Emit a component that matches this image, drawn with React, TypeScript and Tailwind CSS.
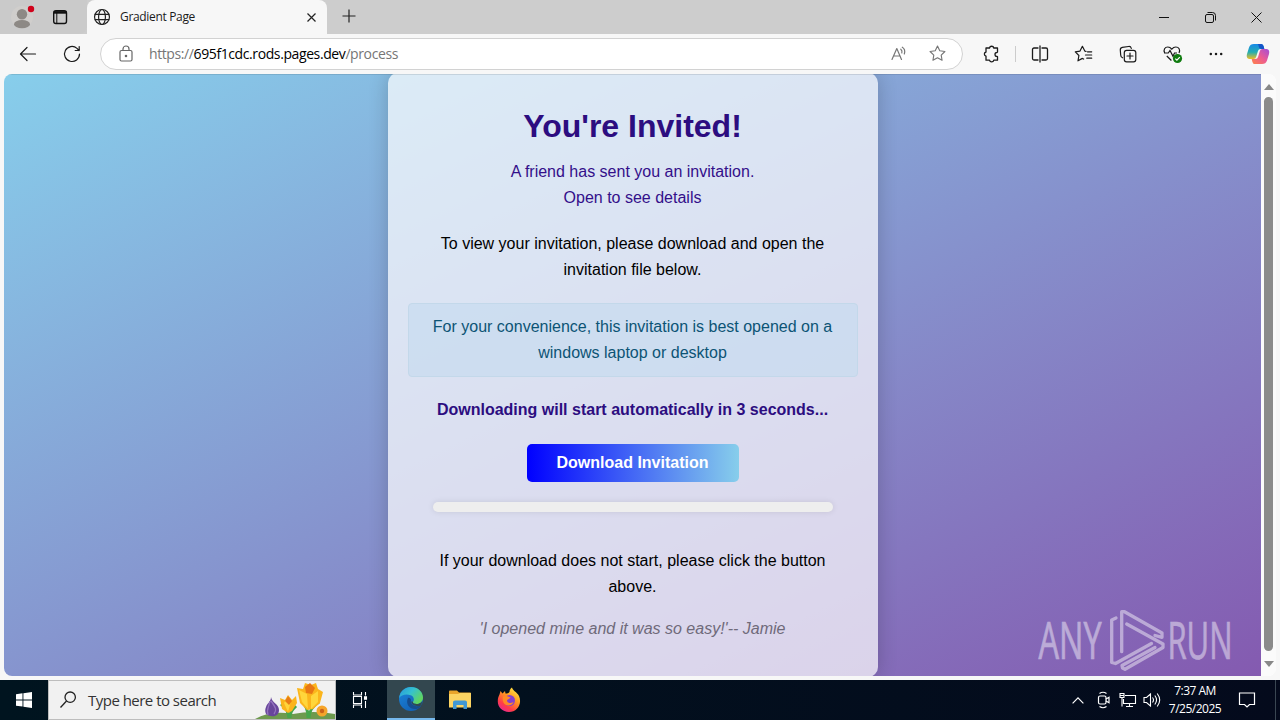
import type { ReactNode } from "react";

type IconProps = {
  size?: number;
  className?: string;
  width?: number;
  children: ReactNode;
};

const Icon = ({ size = 20, className = "", width = 1.2, children }: IconProps) => (
  <svg
    width={size}
    height={size}
    viewBox="0 0 20 20"
    fill="none"
    stroke="currentColor"
    strokeWidth={width}
    strokeLinecap="round"
    strokeLinejoin="round"
    className={`shrink-0 ${className}`}
  >
    {children}
  </svg>
);

const STAR = "M10 2.2l2.4 4.9 5.4.8-3.9 3.8.9 5.4-4.8-2.6-4.8 2.6.9-5.4-3.9-3.8 5.4-.8z";

const TitleBar = () => (
  <div className="flex h-[34px] bg-[#cdcdcd]">
    <div className="flex w-[87px] items-center bg-[#cacaca] rounded-br-lg">
      {/* Profile */}
      <svg width="26" height="28" viewBox="0 0 26 28" className="ml-[10px]">
        <circle cx="12" cy="14" r="11" fill="#d0cecc" />
        <circle cx="12" cy="11.2" r="5.2" fill="#8d8985" />
        <ellipse cx="12" cy="21.2" rx="8" ry="4.1" fill="#8d8985" />
        <circle cx="21" cy="6" r="3.2" fill="#d0021b" />
      </svg>
      <svg width="16" height="16" viewBox="0 0 16 16" className="ml-4" fill="none" stroke="#111" strokeWidth="1.4">
        <rect x="1.7" y="1.7" width="12.8" height="12.8" rx="2.2" />
        <path d="M1.7 3.4h12.8" strokeWidth="2.6" />
        <path d="M4.8 4v10.5" strokeWidth="1" />
      </svg>
    </div>
    <div className="flex w-[240px] items-center rounded-t-lg bg-[#f7f7f7] pl-1.5">
      <Icon size={18} className="text-[#222]" width={1.3}>
        <circle cx="10" cy="10" r="8.3" />
        <ellipse cx="10" cy="10" rx="3.8" ry="8.3" />
        <path d="M2.4 7h15.2M2.4 13h15.2" />
      </Icon>
      <span className="ml-[9px] flex-1 whitespace-nowrap text-[12px] leading-4 tracking-[-0.33px] text-[#1b1b1b]">
        Gradient Page
      </span>
      <svg width="9" height="9" viewBox="0 0 9 9" stroke="#222" strokeWidth="1.2" className="mr-[11px]">
        <path d="M.5 .5l8 8M8.500 .5l-8 8" />
      </svg>
    </div>
    <svg width="14" height="14" viewBox="0 0 14 14" stroke="#222" strokeWidth="1.2" className="ml-[15px] mt-[9px]">
      <path d="M7 .5v13M.5 7h13" />
    </svg>
    <div className="ml-auto flex items-center pr-[18px] text-[#111]">
      <svg width="10" height="10" viewBox="0 0 10 10" stroke="currentColor">
        <path d="M0 5.500h10" />
      </svg>
      <svg width="11" height="11" viewBox="0 0 11 11" fill="none" stroke="currentColor" className="ml-9">
        <rect x=".5" y="2.500" width="8" height="8" rx="1.500" />
        <path d="M2.500 .5h5a3 3 0 0 1 3 3v5" />
      </svg>
      <svg width="11" height="11" viewBox="0 0 11 11" stroke="currentColor" className="ml-[35px]">
        <path d="M.5 .5l10 10M10.500 .5l-10 10" />
      </svg>
    </div>
  </div>
);

const Toolbar = () => (
  <div className="flex h-[39px] items-center bg-[#f7f7f7] text-[#1a1a1a]">
    <Icon className="ml-[18px]">
      <path d="M17.500 10H2.500M9 3.500L2.500 10 9 16.500" />
    </Icon>
    <Icon className="ml-6">
      <path d="M17.500 10A7.500 7.500 0 1 1 15 4.400L17 6.500M17.200 2.500v4h-4" />
    </Icon>
    <div className="ml-[18px] flex h-8 w-[863px] items-center rounded-full border border-[#d2d2d2] bg-white">
      <Icon className="ml-[15px] text-[#666]">
        <rect x="4" y="6.500" width="12" height="10.500" rx="1.500" />
        <path d="M7 6.500V5a3 3 0 0 1 6 0v1.500" />
        <circle cx="10" cy="12" r=".7" fill="currentColor" />
      </Icon>
      <span className="ml-[13px] flex-1 whitespace-nowrap text-[14px] tracking-[-0.4px] text-[#767676]">
        https://<span className="text-black">695f1cdc.rods.pages.dev</span>/process
      </span>
      <Icon className="text-[#767676]">
        <path d="M3 15.500L7.800 4.500l4.700 11M4.700 12h6.200M11.800 5.200c1.200 1 1.500 2.300 1 3.800M13.300 3.200c2.400 1.500 2.900 4 2 6.800" />
      </Icon>
      <Icon size={19} className="ml-[19px] mr-[15px] text-[#767676]">
        <path d={STAR} />
      </Icon>
    </div>
    <Icon className="ml-[19px]" width={1.3}>
      <path d="M7.500 4a2.200 2.200 0 0 1 4.300 0h3.700v4a.8.8 0 0 1-.6.500 1.900 1.900 0 0 0 0 3.800.8.8 0 0 1 .6.500v3.400h-3.700a2.200 2.200 0 0 1-4.300 0H4v-4.100a2.100 2.100 0 0 1 0-4.100V4z" />
    </Icon>
    <div className="ml-[13px] h-4 w-px bg-[#ccc]" />
    <Icon className="ml-[14px]" width={1.3}>
      <path d="M8 4H4a1.500 1.500 0 0 0-1.500 1.500v9A1.500 1.500 0 0 0 4 16h4M12 4h4a1.500 1.500 0 0 1 1.500 1.500v9A1.500 1.500 0 0 1 16 16h-4M10 2v16" />
    </Icon>
    <Icon className="ml-6">
      <path d="M12 7.300L10.800 7.100 8.400 2.300 6 7.100l-4.700.7 3.600 3.700-.9 5.300 4.400-2.400 1.200.7M13.500 7.800h4.200M11.500 11h6.200M12.800 14.200h4.900" />
    </Icon>
    <Icon className="ml-6">
      <path d="M4.600 13.800A3 3 0 0 1 2.700 11L2.300 6a2.500 2.500 0 0 1 2-2.600l6.200-.9A2.500 2.500 0 0 1 13.300 4.300" />
      <rect x="6.300" y="6.300" width="11.500" height="11.500" rx="2.300" />
      <path d="M12 9v6M9 12h6" />
    </Icon>
    <svg width="22" height="20" viewBox="0 0 22 20" className="ml-6 shrink-0" fill="none" stroke="currentColor" strokeWidth="1.200">
      <path d="M2.700 9C1 5.500 3 3 5.800 3c2 0 3.200 1.200 4 2.200.8-1 2-2.200 4-2.200 3 0 4.800 2.800 3.200 6M4.800 12l4.600 4.500M2 9h4.300L8 6.500l3 5.800L12.500 9H15" />
      <circle cx="15.500" cy="14.500" r="4.600" fill="#107c10" stroke="none" />
      <path d="M13.300 14.600l1.600 1.600 2.900-3" stroke="#fff" />
    </svg>
    <Icon className="ml-[22px]">
      <g fill="currentColor" stroke="none">
        <circle cx="4.800" cy="10" r="1.250" />
        <circle cx="10" cy="10" r="1.250" />
        <circle cx="15.200" cy="10" r="1.250" />
      </g>
    </Icon>
    {/* Copilot */}
    <svg width="24" height="22" viewBox="0 0 24 22" className="ml-5 shrink-0">
      <defs>
        <linearGradient id="cpA" x1="0" y1="0" x2="0" y2="1">
          <stop offset="0" stopColor="#1688e8" />
          <stop offset=".55" stopColor="#25aeb0" />
          <stop offset="1" stopColor="#f0bd24" />
        </linearGradient>
        <linearGradient id="cpB" x1="1" y1="0" x2="0" y2="1">
          <stop offset="0" stopColor="#a34ed8" />
          <stop offset=".5" stopColor="#ec5b93" />
          <stop offset="1" stopColor="#ff8348" />
        </linearGradient>
      </defs>
      <path d="M8 1h7c1.600 0 2.200 1 2.700 2.600L18.300 6h-3.500c-1.600 0-2.500.8-3 2.500l-1.500 5C9.700 15.200 9 16 7.500 16H4c-3 0-3.700-2.200-3-5L3 4.500C3.800 2 5.300 1 8 1z" fill="url(#cpA)" />
      <path d="M11.500 1H15c1.600 0 2.200 1 2.700 2.600L18.300 6H15c-2 0-2-2-2.400-3.200C12.300 1.800 12 1.200 11.500 1z" fill="#1455c8" />
      <path d="M16 21H9c-1.600 0-2.200-1-2.700-2.600L5.700 16h3.500c1.600 0 2.500-.8 3-2.500l1.500-5C14.300 6.800 15 6 16.500 6H20c3 0 3.700 2.200 3 5l-2 6.500c-.8 2.500-2.300 3.500-5 3.500z" fill="url(#cpB)" />
    </svg>
  </div>
);

const InviteCard = () => (
  <div className="-mt-px h-[604px] w-[490px] shrink-0 rounded-[10px] bg-white/70 px-5 pt-[28px] text-center font-['Liberation_Sans',Arial,sans-serif] text-[16px] leading-[26px] text-black shadow-[0_0_20px_rgba(0,0,0,0.2)]">
    <h1 className="pr-px text-[32px] leading-[51px] font-bold text-[#2c0d80]">You're Invited!</h1>
    <p className="mt-[7px] pr-px text-[#330f8a]">
      A friend has sent you an invitation.
      <br />
      Open to see details
    </p>
    <p className="mx-auto mt-5 w-[400px] pr-px">To view your invitation, please download and open the invitation file below.</p>
    <div className="mt-5 rounded border border-[#c3d8ea] bg-[#c8dcef]/70 pr-[21px] pl-5 py-[10px] text-[#0c5475]">
      For your convenience, this invitation is best opened on a windows laptop or desktop
    </div>
    <p className="mt-5 pr-px font-bold text-[#2c0d80]">Downloading will start automatically in 3 seconds...</p>
    <button className="mt-[21px] block h-[38px] w-[212px] pr-px mx-auto rounded-[5px] bg-linear-to-r/srgb from-[#0000ff] to-[#87ceeb] font-bold text-white">
      Download Invitation
    </button>
    <div className="mx-auto mt-5 h-[10px] w-[400px] rounded-full bg-[#eeeeee] shadow-[0_0_6px_rgba(0,0,0,0.1)]" />
    <p className="mx-auto mt-9 w-[400px] pr-px">If your download does not start, please click the button above.</p>
    <p className="mt-4 pr-px text-[#6f6a7a] italic">'I opened mine and it was so easy!'-- Jamie</p>
  </div>
);

const Watermark = () => (
  <svg width="200" height="64" viewBox="0 0 200 64" className="absolute right-[24px] bottom-[4px] overflow-visible opacity-45">
    <g fill="#fff" fontFamily="'Open Sans', sans-serif" fontWeight="400" fontSize="52" stroke="#fff" strokeWidth=".7">
      <text x="1.500" y="51" textLength="63" lengthAdjust="spacingAndGlyphs">ANY</text>
      <text x="130.500" y="51" textLength="65" lengthAdjust="spacingAndGlyphs">RUN</text>
    </g>
    <path
      d="M84.700 43.700V3.700L87.500 3.700 125 25v4.300L118 27.500M79 10l-4.300 2V54.500l3.800 1 36-20M89.700 16L126 36v3.500L88 61.300 85.500 60 85 57.500 118 39.500"
      fill="none"
      stroke="#fff"
      strokeWidth="3.300"
      strokeLinecap="round"
      strokeLinejoin="round"
    />
  </svg>
);

const Page = () => (
  <div className="flex h-[607px] bg-[#f7f7f7] pt-px pb-1 pl-1 pr-1">
    <div className="flex flex-1 overflow-hidden rounded-lg bg-white">
      <div className="relative flex w-[1257px] justify-center overflow-hidden bg-[linear-gradient(to_bottom_right,#87ceeb,#8692cd_52%,#845ab0)]">
        <div className="absolute inset-x-0 top-0 h-px bg-black/10" />
        <div className="ml-px">
          <InviteCard />
        </div>
        <Watermark />
      </div>
      <div className="flex w-[15px] flex-col items-center bg-[#fbfbfb]">
        <svg width="10" height="6" viewBox="0 0 10 6" className="mt-[10px]">
          <path d="M5 0l5 6H0z" fill="#888" />
        </svg>
        <div className="mt-[7px] h-[554px] w-[9px] rounded-full bg-[#8b8b8b]" />
        <svg width="10" height="6" viewBox="0 0 10 6" className="mt-2.5">
          <path d="M5 6L0 0h10z" fill="#888" />
        </svg>
      </div>
    </div>
  </div>
);

const Crocuses = () => (
  <svg width="80" height="38" viewBox="0 0 80 38" className="shrink-0">
    <path d="M0 38Q16 29 38 33Q58 29 80 33V38z" fill="#6e9a4e" />
    <path d="M16 16c1 6 8 7 8 13 0 5-4 7-8 6-5 0-7-4-5-9 1-4 5-5 5-10z" fill="#68459b" />
    <path d="M15 20c-1 6-4 8-2 14M16 20c5 7 6 9 3 13" stroke="#9272bd" strokeWidth="1.300" fill="none" />
    <path d="M34 37c-1-6-2-10-8-14M35 37c0-6 2-8 6-12M53 37c0-9-2-12-7-18M54 37c0-8 5-13 10-16" stroke="#47a64b" strokeWidth="3" fill="none" />
    <path d="M25 17l5 2 3-5 4 5 4-4 1 7-5 8-4 2-6-4z" fill="#fbb41c" />
    <path d="M33 15l3 5-3 11-4-9z" fill="#ffd43a" />
    <path d="M30 20l3-5 4 5-3 4z" fill="#e87c16" />
    <path d="M42 7l6 1 2-6 6 2 5-2 2 6 5 3-3 11-7 6-6 1-7-7z" fill="#fbb51c" />
    <path d="M44 9l8 4 1 15-6-7zM63 10l-7 5v13l7-7z" fill="#ffd63b" />
    <path d="M50 6l5-4 5 5-3 6-6-1z" fill="#e87714" />
    <circle cx="67" cy="30" r="5.500" fill="#f6a52b" />
    <circle cx="67" cy="30" r="2.200" fill="#cd6319" />
  </svg>
);

const EdgeLogo = () => (
  <svg width="26" height="26" viewBox="0 0 26 26">
    <defs>
      <linearGradient id="edgeTop" x1="0" y1="0" x2="1" y2=".6">
        <stop offset="0" stopColor="#2797dc" />
        <stop offset=".5" stopColor="#35c1d0" />
        <stop offset="1" stopColor="#62d65c" />
      </linearGradient>
      <linearGradient id="edgeLow" x1="0" y1="0" x2=".7" y2="1">
        <stop offset="0" stopColor="#1c87dd" />
        <stop offset="1" stopColor="#1260b4" />
      </linearGradient>
    </defs>
    <circle cx="13" cy="13" r="12" fill="url(#edgeLow)" />
    <path d="M1.200 12C2 5 7 1 13 1c7 0 12 5 12 10.500 0 4-3 6.500-6.500 6.500-2 0-4-.7-3.500-2.200 1.500-1.500 1.200-5.300-2.300-6.600C8 7.500 3 9 1.200 12z" fill="url(#edgeTop)" />
    <path d="M10 12c-3 6 2 12 8.500 11 2-.4 3.700-1.700 4.800-3.500-5 2.300-11.800-.8-10.300-5.500-.2-1.500-1.800-3-3-2z" fill="#164c8d" />
    <path d="M15 15.800C14.500 17.300 16.500 18 18.500 18c2.500 0 4.500-.9 5.700-2.800L23.300 19.500C20 21 14 20 13 15.500z" fill="#304a52" />
  </svg>
);

const Taskbar = () => (
  <div className="flex h-10 bg-linear-to-r from-[#00141f] to-[#040a1c] text-white">
    <div className="flex w-12 items-center justify-center">
      <svg width="16" height="16" viewBox="0 0 16 16" fill="#fff">
        <path d="M0 2.200L6.500 1.300v6.200H0zM7.400 1.200L16 0v7.500H7.400zM0 8.400h6.500v6.200L0 13.700zM7.400 8.400H16V16l-8.600-1.200z" />
      </svg>
    </div>
    <div className="flex w-72 items-center overflow-hidden border border-[#bdbdbd] bg-[#f1f1f1] pl-[10px]">
      <svg width="18" height="18" viewBox="0 0 18 18" fill="none" stroke="#222" strokeWidth="1.300">
        <circle cx="11.200" cy="6.200" r="5.200" />
        <path d="M7.500 10L1.500 16.500" />
      </svg>
      <span className="ml-[11px] flex-1 whitespace-nowrap text-[15px] tracking-[-0.52px] text-[#333]">Type here to search</span>
      <Crocuses />
    </div>
    <div className="flex w-12 items-center justify-center">
      <svg width="18" height="18" viewBox="0 0 18 18" fill="none" stroke="#fff" strokeWidth="1.100">
        <path d="M2.500 1v3h8V1M2.500 17v-3h8v3M2.500 5.500h8v7h-8zM14.500 1v3.500M14.500 10v7" />
        <path d="M13.500 5.800h2v2.400h-2z" fill="#fff" />
      </svg>
    </div>
    <div className="ml-[3px] flex w-12 items-center justify-center border-b-2 border-[#76b9ed] bg-[#33474f]">
      <EdgeLogo />
    </div>
    <div className="flex w-12 items-center justify-center pl-0.5">
      <svg width="22" height="20" viewBox="0 0 22 20">
        <path d="M0 1.500C0 1 .5.500 1 .5h7l2 2h11c.5 0 1 .5 1 1V17H0z" fill="#e9a52b" />
        <path d="M0 4h9l2-1h11v14.500H0z" fill="#fcd462" />
        <path d="M4 19v-6.500c0-1.300.8-2 2-2h10c1.200 0 2 .7 2 2V19h-3.500v-4h-7v4z" fill="#3f97d3" />
      </svg>
    </div>
    <div className="flex w-[52px] items-center justify-center">
      <svg width="24" height="26" viewBox="0 0 24 26">
        <defs>
          <linearGradient id="fox" x1=".85" y1="0" x2=".2" y2="1">
            <stop offset="0" stopColor="#fff04a" />
            <stop offset=".4" stopColor="#ff9a20" />
            <stop offset=".75" stopColor="#ff3b49" />
            <stop offset="1" stopColor="#e5269a" />
          </linearGradient>
        </defs>
        <path d="M2.500 7.500L3.500 4l2 2.500L8 4l.5 2.500c2 0 3-.5 4-1.500 0-2 1-3.500 2.500-4.500.5 3 5 4.500 7 8.500C25.500 17 20 25 12 25 5 25 .5 19.500.8 14c0-3 .7-4.500 1.700-6.500z" fill="url(#fox)" />
        <circle cx="12.500" cy="13.500" r="5.500" fill="#8440cf" />
        <path d="M6 9.500c3-1.500 4 0 7.500.8-.5 1.700-3 1.700-3.500 3.200 0 2.500 3.500 3.500 6.500 1.500-1 4-8 5-10 .5-.9-2-1-4-.5-6z" fill="#ff8a25" />
      </svg>
    </div>
    <div className="ml-auto flex items-center">
      <svg width="12" height="7" viewBox="0 0 12 7" fill="none" stroke="#fff" strokeWidth="1.200">
        <path d="M.6 6.300L6 .9l5.400 5.400" />
      </svg>
      <svg width="14" height="18" viewBox="0 0 14 18" fill="none" stroke="#fff" strokeWidth="1.200" className="ml-[13px]">
        <rect x="1.500" y="5" width="7.500" height="8" rx="1.500" />
        <path d="M9 8l3-1.800v5.600L9 10M2.500 2.500Q6 0 9.500 2.500M2.500 15.500Q6 18 9.500 15.500" />
      </svg>
      <svg width="18" height="16" viewBox="0 0 18 16" fill="none" stroke="#fff" strokeWidth="1.100" className="ml-2">
        <path d="M6 3.500h10.500v8H4.500V7M10.500 11.500v2.500M7 14.500h7M1 1.500h4v4H1zM3 5.500v9M1.500 3.500h3" />
      </svg>
      <svg width="18" height="16" viewBox="0 0 18 16" fill="none" stroke="#fff" strokeWidth="1.100" className="ml-1.5">
        <path d="M1 5.500h2.500L7.500 2v12l-4-3.500H1zM9.500 5.500q2 2.500 0 5M11.800 3.500q3.500 4.500 0 9M14.200 1.500q5 6.500 0 13" />
      </svg>
      <div className="ml-1.5 w-[56px] text-center text-[12px] leading-[18px] tracking-[-0.5px] whitespace-nowrap">
        <div>7:37 AM</div>
        <div>7/25/2025</div>
      </div>
      <svg width="18" height="18" viewBox="0 0 18 18" fill="none" stroke="#fff" strokeWidth="1.200" className="ml-[15px]">
        <path d="M1.500 2h15v11.500h-5L9 16l-2.500-2.500h-5z" />
      </svg>
      <div className="ml-[19px] mr-1 h-10 w-px bg-[#3a4652]" />
    </div>
  </div>
);

export default function App() {
  return (
    <div className="h-[720px] w-[1280px] overflow-hidden bg-[#f7f7f7] font-['Open_Sans','Noto_Sans',sans-serif]">
      <TitleBar />
      <Toolbar />
      <Page />
      <Taskbar />
    </div>
  );
}
